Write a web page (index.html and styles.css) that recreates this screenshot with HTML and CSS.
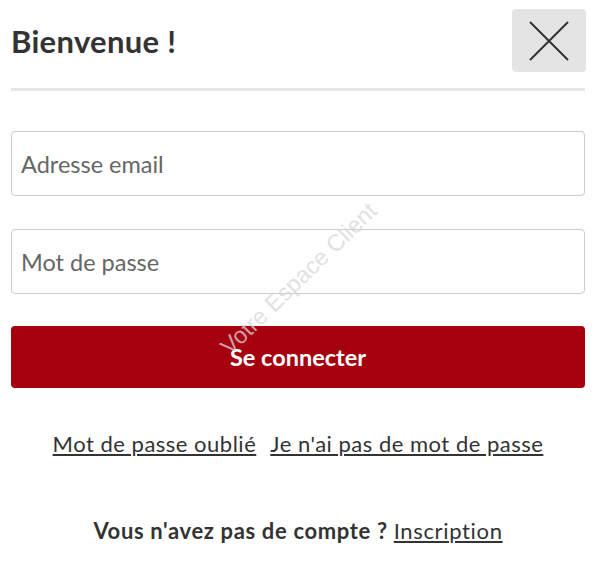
FILE: index.html
```html
<!DOCTYPE html>
<html lang="fr">

<head>
    <meta charset="UTF-8" />
    <meta name="viewport" content="width=device-width, initial-scale=1.0" />
    <title>Bienvenue</title>
    <link rel="stylesheet" href="styles.css">
</head>

<body>

    <div class="modal">
        <!-- En-tête avec titre et bouton fermer -->
        <div class="modal-header">
            <h2>Bienvenue !</h2>
            <button class="btn-fermer" type="button" aria-label="Fermer">
                <svg width="40" height="40" viewBox="0 0 40 40">
                    <path d="M1 1 L39 39 M39 1 L1 39" stroke="#333" stroke-width="2" fill="none" />
                </svg>
            </button>
        </div>

        <!-- Formulaire de connexion -->
        <form class="form-connexion">
            <input type="email" placeholder="Adresse email">
            <input type="password" placeholder="Mot de passe">
            <button type="submit" class="btn-connecter">Se connecter</button>
        </form>

        <div class="liens">
            <a href="#">Mot de passe oublié</a>
            <a href="#">Je n'ai pas de mot de passe</a>
        </div>

        <p class="inscription">Vous n'avez pas de compte ? <a href="#">Inscription</a></p>

        <!-- Filigrane -->
        <span class="filigrane">Votre Espace Client</span>
    </div>

</body>

</html>
```

FILE: styles.css
```css
body {
    margin: 0;
    font-family: Lato, "Open Sans", sans-serif;
    background: #fff;
    color: #333;
}

.modal {
    position: relative;
    padding: 9px 15px 0 11px;
}

/* En-tête */
.modal-header {
    display: flex;
    justify-content: space-between;
    align-items: center;
    padding-bottom: 16px;
    border-bottom: 3px solid #e6e6e6;
}

.modal-header h2 {
    margin: 0;
    font-size: 31px;
    line-height: 36px;
    letter-spacing: 0.3px;
    font-weight: 700;
    color: #333;
}

.btn-fermer {
    width: 74px;
    height: 63px;
    margin-right: -1px;
    border: none;
    border-radius: 4px;
    background: #e4e4e4;
    display: flex;
    align-items: center;
    justify-content: center;
    padding: 0;
    cursor: pointer;
}

/* Formulaire */
.form-connexion {
    display: flex;
    flex-direction: column;
    gap: 33px;
    margin-top: 40px;
}

.form-connexion input {
    height: 65px;
    box-sizing: border-box;
    border: 1px solid #cccccc;
    border-radius: 4px;
    padding: 0 9px;
    font-family: Lato, sans-serif;
    font-size: 23.5px;
    color: #333;
}

.form-connexion input::placeholder {
    color: #666;
}

.btn-connecter {
    height: 62px;
    margin-top: -1px;
    border: none;
    border-radius: 4px;
    background: #a6000f;
    color: #fff;
    font-family: Lato, sans-serif;
    font-size: 23.5px;
    font-weight: 700;
    cursor: pointer;
}

/* Liens */
.liens {
    display: flex;
    justify-content: center;
    gap: 14px;
    margin-top: 44px;
    font-size: 22px;
    line-height: 24px;
    letter-spacing: 0.5px;
}

.liens a,
.inscription a {
    color: #333;
    text-decoration: underline;
}

.inscription {
    margin: 62px 0 0;
    text-align: center;
    font-size: 22px;
    line-height: 26px;
    letter-spacing: 0.65px;
    font-weight: 700;
}

.inscription a {
    font-weight: 400;
}

.filigrane {
    position: absolute;
    left: 299px;
    top: 279px;
    transform: translate(-50%, -50%) rotate(-44deg);
    font-family: "Liberation Sans", Arial, sans-serif;
    font-size: 23.5px;
    color: rgba(215, 215, 215, 0.75);
    white-space: nowrap;
    pointer-events: none;
}
```
